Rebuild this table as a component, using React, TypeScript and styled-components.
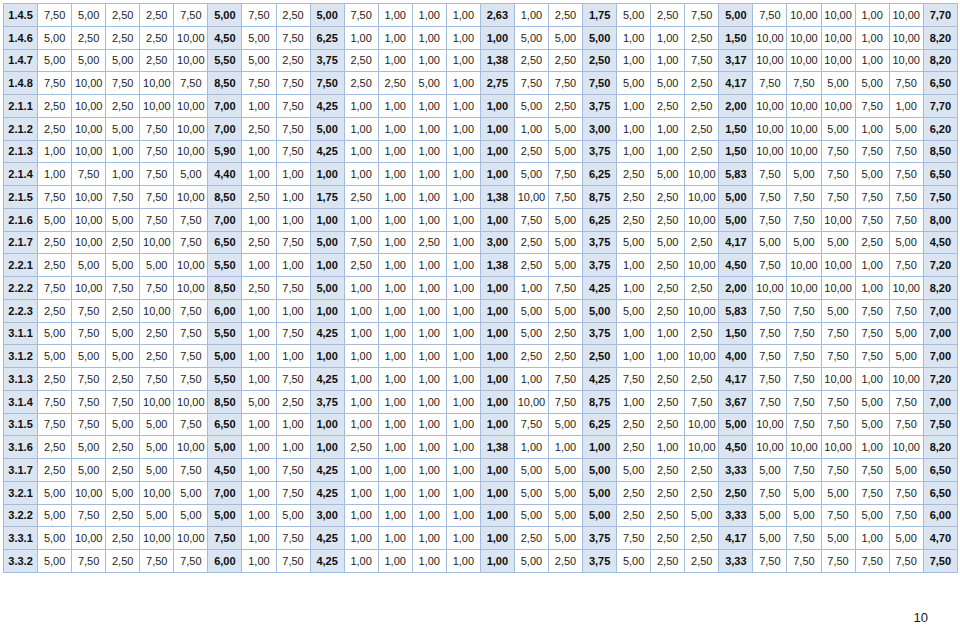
import React from "react"
import styled, { createGlobalStyle } from "styled-components"

const GlobalStyle = createGlobalStyle`
  html, body {
    margin: 0;
    padding: 0;
    background: #ffffff;
  }
  body {
    font-family: "Liberation Sans", Arial, sans-serif;
    color: #1c1c1c;
  }
`

const colors = {
  border: "#a3bcdb",
  highlight: "#dbe5f1",
  text: "#1e1e1e",
  strong: "#0d0d0d",
}

// label column plus the averaged columns are shaded and bold
const SUMMARY_COLUMNS = new Set([0, 6, 9, 14, 17, 21, 27])

const rows = [
  "1.4.5 7,50 5,00 2,50 2,50 7,50 5,00 7,50 2,50 5,00 7,50 1,00 1,00 1,00 2,63 1,00 2,50 1,75 5,00 2,50 7,50 5,00 7,50 10,00 10,00 1,00 10,00 7,70",
  "1.4.6 5,00 2,50 2,50 2,50 10,00 4,50 5,00 7,50 6,25 1,00 1,00 1,00 1,00 1,00 5,00 5,00 5,00 1,00 1,00 2,50 1,50 10,00 10,00 10,00 1,00 10,00 8,20",
  "1.4.7 5,00 5,00 5,00 2,50 10,00 5,50 5,00 2,50 3,75 2,50 1,00 1,00 1,00 1,38 2,50 2,50 2,50 1,00 1,00 7,50 3,17 10,00 10,00 10,00 1,00 10,00 8,20",
  "1.4.8 7,50 10,00 7,50 10,00 7,50 8,50 7,50 7,50 7,50 2,50 2,50 5,00 1,00 2,75 7,50 7,50 7,50 5,00 5,00 2,50 4,17 7,50 7,50 5,00 5,00 7,50 6,50",
  "2.1.1 2,50 10,00 2,50 10,00 10,00 7,00 1,00 7,50 4,25 1,00 1,00 1,00 1,00 1,00 5,00 2,50 3,75 1,00 2,50 2,50 2,00 10,00 10,00 10,00 7,50 1,00 7,70",
  "2.1.2 2,50 10,00 5,00 7,50 10,00 7,00 2,50 7,50 5,00 1,00 1,00 1,00 1,00 1,00 1,00 5,00 3,00 1,00 1,00 2,50 1,50 10,00 10,00 5,00 1,00 5,00 6,20",
  "2.1.3 1,00 10,00 1,00 7,50 10,00 5,90 1,00 7,50 4,25 1,00 1,00 1,00 1,00 1,00 2,50 5,00 3,75 1,00 1,00 2,50 1,50 10,00 10,00 7,50 7,50 7,50 8,50",
  "2.1.4 1,00 7,50 1,00 7,50 5,00 4,40 1,00 1,00 1,00 1,00 1,00 1,00 1,00 1,00 5,00 7,50 6,25 2,50 5,00 10,00 5,83 7,50 5,00 7,50 5,00 7,50 6,50",
  "2.1.5 7,50 10,00 7,50 7,50 10,00 8,50 2,50 1,00 1,75 2,50 1,00 1,00 1,00 1,38 10,00 7,50 8,75 2,50 2,50 10,00 5,00 7,50 7,50 7,50 7,50 7,50 7,50",
  "2.1.6 5,00 10,00 5,00 7,50 7,50 7,00 1,00 1,00 1,00 1,00 1,00 1,00 1,00 1,00 7,50 5,00 6,25 2,50 2,50 10,00 5,00 7,50 7,50 10,00 7,50 7,50 8,00",
  "2.1.7 2,50 10,00 2,50 10,00 7,50 6,50 2,50 7,50 5,00 7,50 1,00 2,50 1,00 3,00 2,50 5,00 3,75 5,00 5,00 2,50 4,17 5,00 5,00 5,00 2,50 5,00 4,50",
  "2.2.1 2,50 5,00 5,00 5,00 10,00 5,50 1,00 1,00 1,00 2,50 1,00 1,00 1,00 1,38 2,50 5,00 3,75 1,00 2,50 10,00 4,50 7,50 10,00 10,00 1,00 7,50 7,20",
  "2.2.2 7,50 10,00 7,50 7,50 10,00 8,50 2,50 7,50 5,00 1,00 1,00 1,00 1,00 1,00 1,00 7,50 4,25 1,00 2,50 2,50 2,00 10,00 10,00 10,00 1,00 10,00 8,20",
  "2.2.3 2,50 7,50 2,50 10,00 7,50 6,00 1,00 1,00 1,00 1,00 1,00 1,00 1,00 1,00 5,00 5,00 5,00 5,00 2,50 10,00 5,83 7,50 7,50 5,00 7,50 7,50 7,00",
  "3.1.1 5,00 7,50 5,00 2,50 7,50 5,50 1,00 7,50 4,25 1,00 1,00 1,00 1,00 1,00 5,00 2,50 3,75 1,00 1,00 2,50 1,50 7,50 7,50 7,50 7,50 5,00 7,00",
  "3.1.2 5,00 5,00 5,00 2,50 7,50 5,00 1,00 1,00 1,00 1,00 1,00 1,00 1,00 1,00 2,50 2,50 2,50 1,00 1,00 10,00 4,00 7,50 7,50 7,50 7,50 5,00 7,00",
  "3.1.3 2,50 7,50 2,50 7,50 7,50 5,50 1,00 7,50 4,25 1,00 1,00 1,00 1,00 1,00 1,00 7,50 4,25 7,50 2,50 2,50 4,17 7,50 7,50 10,00 1,00 10,00 7,20",
  "3.1.4 7,50 7,50 7,50 10,00 10,00 8,50 5,00 2,50 3,75 1,00 1,00 1,00 1,00 1,00 10,00 7,50 8,75 1,00 2,50 7,50 3,67 7,50 7,50 7,50 5,00 7,50 7,00",
  "3.1.5 7,50 7,50 5,00 5,00 7,50 6,50 1,00 1,00 1,00 1,00 1,00 1,00 1,00 1,00 7,50 5,00 6,25 2,50 2,50 10,00 5,00 10,00 7,50 7,50 5,00 7,50 7,50",
  "3.1.6 2,50 5,00 2,50 5,00 10,00 5,00 1,00 1,00 1,00 2,50 1,00 1,00 1,00 1,38 1,00 1,00 1,00 2,50 1,00 10,00 4,50 10,00 10,00 10,00 1,00 10,00 8,20",
  "3.1.7 2,50 5,00 2,50 5,00 7,50 4,50 1,00 7,50 4,25 1,00 1,00 1,00 1,00 1,00 5,00 5,00 5,00 5,00 2,50 2,50 3,33 5,00 7,50 7,50 7,50 5,00 6,50",
  "3.2.1 5,00 10,00 5,00 10,00 5,00 7,00 1,00 7,50 4,25 1,00 1,00 1,00 1,00 1,00 5,00 5,00 5,00 2,50 2,50 2,50 2,50 7,50 5,00 5,00 7,50 7,50 6,50",
  "3.2.2 5,00 7,50 2,50 5,00 5,00 5,00 1,00 5,00 3,00 1,00 1,00 1,00 1,00 1,00 5,00 5,00 5,00 2,50 2,50 5,00 3,33 5,00 5,00 7,50 5,00 7,50 6,00",
  "3.3.1 5,00 10,00 2,50 10,00 10,00 7,50 1,00 7,50 4,25 1,00 1,00 1,00 1,00 1,00 2,50 5,00 3,75 7,50 2,50 2,50 4,17 5,00 7,50 5,00 1,00 5,00 4,70",
  "3.3.2 5,00 7,50 2,50 7,50 7,50 6,00 1,00 7,50 4,25 1,00 1,00 1,00 1,00 1,00 5,00 2,50 3,75 5,00 2,50 2,50 3,33 7,50 7,50 7,50 7,50 7,50 7,50",
].map((line) => line.split(" "))

const Page = styled.div`
  width: 960px;
  height: 626px;
  box-sizing: border-box;
  padding: 3px 2px 0 3px;
  display: flex;
  flex-direction: column;
`

const Table = styled.table`
  width: 955px;
  table-layout: fixed;
  border-collapse: collapse;
  border: 1px solid ${colors.border};
`

const Row = styled.tr`
  height: 22.75px;
`

const Cell = styled.td<{ $summary: boolean }>`
  padding: 0;
  border: 1px solid ${colors.border};
  text-align: center;
  vertical-align: middle;
  font-size: 11px;
  white-space: nowrap;
  overflow: hidden;
  color: ${(p) => (p.$summary ? colors.strong : colors.text)};
  font-weight: ${(p) => (p.$summary ? 700 : 400)};
  background: ${(p) => (p.$summary ? colors.highlight : "#ffffff")};
`

const Footer = styled.div`
  display: flex;
  justify-content: flex-end;
  padding: 37px 30px 0 0;
`

const PageNumber = styled.span`
  font-size: 13px;
  color: #1a1a1a;
`

const App = () => {
  return (
    <>
      <GlobalStyle />
      <Page>
        <Table>
          <tbody>
            {rows.map((cells) => (
              <Row key={cells[0]}>
                {cells.map((value, i) => (
                  <Cell key={i} $summary={SUMMARY_COLUMNS.has(i)}>
                    {value}
                  </Cell>
                ))}
              </Row>
            ))}
          </tbody>
        </Table>
        <Footer>
          <PageNumber>10</PageNumber>
        </Footer>
      </Page>
    </>
  )
}

export default App
